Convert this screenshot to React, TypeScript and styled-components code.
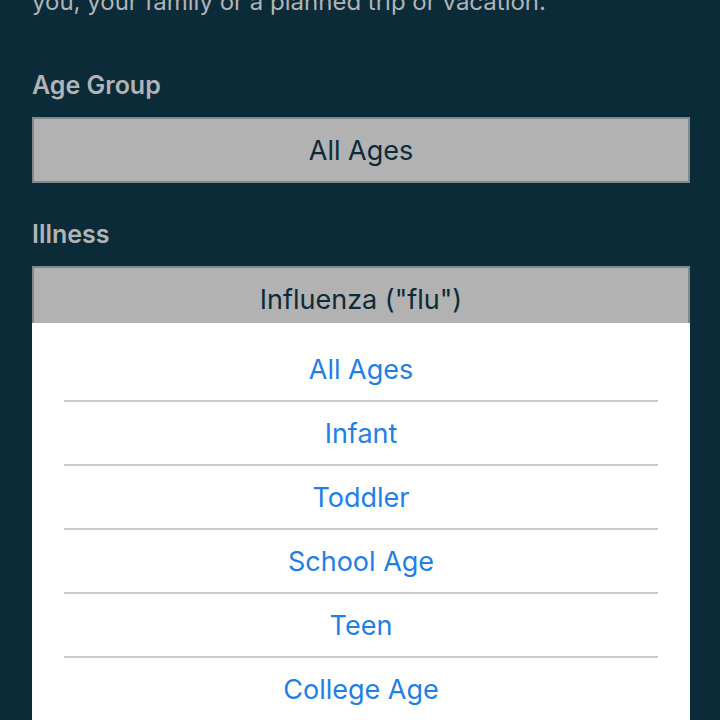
import React, { useState } from "react";
import styled, { createGlobalStyle } from "styled-components";

const GlobalStyle = createGlobalStyle`
  * { box-sizing: border-box; }
  html, body { margin: 0; background: #0c2b38; }
  body, button, select { font-family: Inter, "Liberation Sans", sans-serif; }
`;

const Page = styled.main`
  position: relative;
  height: 100vh;
  overflow: hidden;
  padding: 0 30px 0 32px;
  background: #0c2b38;
  color: #b1b4b7;
`;

const IntroWindow = styled.div`
  height: 18px;
  margin-bottom: 51px;
  display: flex;
  align-items: flex-end;
`;

const Intro = styled.p`
  margin: 0;
  font-size: 24px;
  line-height: 32px;
`;

const Form = styled.form`
  display: flex;
  flex-direction: column;
  gap: 35px;
`;

const Field = styled.div`
  display: flex;
  flex-direction: column;
  gap: 16px;
`;

const Label = styled.label`
  font-size: 25px;
  line-height: 32px;
  font-weight: 600;
`;

const Select = styled.select`
  appearance: none;
  width: 100%;
  height: 66px;
  padding: 0;
  border: 2px solid #82898e;
  border-radius: 0;
  background: #b2b2b2;
  color: #0c2b38;
  font-size: 27px;
  text-align: center;
  text-align-last: center;
`;

const Sheet = styled.div`
  position: absolute;
  top: 323px;
  right: 30px;
  bottom: 0;
  left: 32px;
  overflow: hidden;
  padding: 15px 32px 0;
  background: #fff;
`;

const Option = styled.button`
  display: block;
  width: 100%;
  height: 64px;
  padding: 2px 0 0;
  border: 0;
  border-bottom: 2px solid #cbcbcd;
  border-radius: 0;
  background: transparent;
  color: #1f7fe8;
  font-size: 27px;
  line-height: 32px;
  text-align: center;
`;

const ages = ["All Ages", "Infant", "Toddler", "School Age", "Teen", "College Age"];

export default function App() {
  const [age, setAge] = useState("All Ages");
  return (
    <Page>
      <GlobalStyle />
      <IntroWindow>
        <Intro>you, your family or a planned trip or vacation.</Intro>
      </IntroWindow>
      <Form>
        <Field>
          <Label htmlFor="age">Age Group</Label>
          <Select id="age" value={age} onChange={(e) => setAge(e.target.value)}>
            {ages.map((a) => <option key={a}>{a}</option>)}
          </Select>
        </Field>
        <Field>
          <Label htmlFor="illness">Illness</Label>
          <Select id="illness">
            <option>Influenza ("flu")</option>
          </Select>
        </Field>
      </Form>
      <Sheet role="group" aria-label="Age Group">
        {ages.map((a) => (
          <Option key={a} type="button" onClick={() => setAge(a)}>{a}</Option>
        ))}
      </Sheet>
    </Page>
  );
}
